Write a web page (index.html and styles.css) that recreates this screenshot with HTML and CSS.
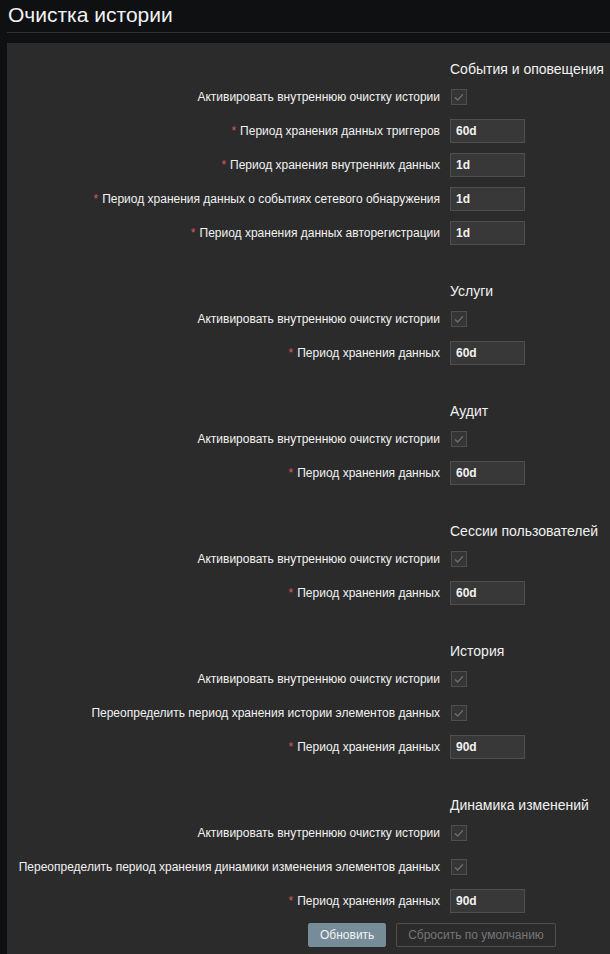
FILE: index.html
```html
<!DOCTYPE html>
<html lang="ru">
<head>
    <meta charset="UTF-8">
    <meta name="viewport" content="width=device-width, initial-scale=1.0">
    <title>Очистка истории</title>
    <link rel="stylesheet" href="styles.css">
</head>
<body>
    <header class="page-header">
        <h1>Очистка истории</h1>
    </header>

    <main class="page-body">
        <form class="form-list">
            <section class="form-section">
                <h4 class="section-title">События и оповещения</h4>
                <div class="form-row">
                    <label class="form-label">Активировать внутреннюю очистку истории</label>
                    <span class="checkbox"><svg viewBox="0 0 16 16"><polyline points="3.5,8.5 6.5,11.5 12.5,5"/></svg></span>
                </div>
                <div class="form-row">
                    <label class="form-label required">Период хранения данных триггеров</label>
                    <input class="text-box" type="text" value="60d">
                </div>
                <div class="form-row">
                    <label class="form-label required">Период хранения внутренних данных</label>
                    <input class="text-box" type="text" value="1d">
                </div>
                <div class="form-row">
                    <label class="form-label required">Период хранения данных о событиях сетевого обнаружения</label>
                    <input class="text-box" type="text" value="1d">
                </div>
                <div class="form-row">
                    <label class="form-label required">Период хранения данных авторегистрации</label>
                    <input class="text-box" type="text" value="1d">
                </div>
            </section>

            <section class="form-section">
                <h4 class="section-title">Услуги</h4>
                <div class="form-row">
                    <label class="form-label">Активировать внутреннюю очистку истории</label>
                    <span class="checkbox"><svg viewBox="0 0 16 16"><polyline points="3.5,8.5 6.5,11.5 12.5,5"/></svg></span>
                </div>
                <div class="form-row">
                    <label class="form-label required">Период хранения данных</label>
                    <input class="text-box" type="text" value="60d">
                </div>
            </section>

            <section class="form-section">
                <h4 class="section-title">Аудит</h4>
                <div class="form-row">
                    <label class="form-label">Активировать внутреннюю очистку истории</label>
                    <span class="checkbox"><svg viewBox="0 0 16 16"><polyline points="3.5,8.5 6.5,11.5 12.5,5"/></svg></span>
                </div>
                <div class="form-row">
                    <label class="form-label required">Период хранения данных</label>
                    <input class="text-box" type="text" value="60d">
                </div>
            </section>

            <section class="form-section">
                <h4 class="section-title">Сессии пользователей</h4>
                <div class="form-row">
                    <label class="form-label">Активировать внутреннюю очистку истории</label>
                    <span class="checkbox"><svg viewBox="0 0 16 16"><polyline points="3.5,8.5 6.5,11.5 12.5,5"/></svg></span>
                </div>
                <div class="form-row">
                    <label class="form-label required">Период хранения данных</label>
                    <input class="text-box" type="text" value="60d">
                </div>
            </section>

            <section class="form-section">
                <h4 class="section-title">История</h4>
                <div class="form-row">
                    <label class="form-label">Активировать внутреннюю очистку истории</label>
                    <span class="checkbox"><svg viewBox="0 0 16 16"><polyline points="3.5,8.5 6.5,11.5 12.5,5"/></svg></span>
                </div>
                <div class="form-row">
                    <label class="form-label">Переопределить период хранения истории элементов данных</label>
                    <span class="checkbox"><svg viewBox="0 0 16 16"><polyline points="3.5,8.5 6.5,11.5 12.5,5"/></svg></span>
                </div>
                <div class="form-row">
                    <label class="form-label required">Период хранения данных</label>
                    <input class="text-box" type="text" value="90d">
                </div>
            </section>

            <section class="form-section">
                <h4 class="section-title">Динамика изменений</h4>
                <div class="form-row">
                    <label class="form-label">Активировать внутреннюю очистку истории</label>
                    <span class="checkbox"><svg viewBox="0 0 16 16"><polyline points="3.5,8.5 6.5,11.5 12.5,5"/></svg></span>
                </div>
                <div class="form-row">
                    <label class="form-label">Переопределить период хранения динамики изменения элементов данных</label>
                    <span class="checkbox"><svg viewBox="0 0 16 16"><polyline points="3.5,8.5 6.5,11.5 12.5,5"/></svg></span>
                </div>
                <div class="form-row">
                    <label class="form-label required">Период хранения данных</label>
                    <input class="text-box" type="text" value="90d">
                </div>
            </section>

            <div class="form-actions">
                <button type="submit" class="btn-primary">Обновить</button>
                <button type="button" class="btn-alt">Сбросить по умолчанию</button>
            </div>
        </form>
    </main>
</body>
</html>
```

FILE: styles.css
```css
:root {
    --bg-color: #0e1012;
    --panel-color: #2b2b2b;
    --text-color: #f2f2f2;
    --border-color: #4f4f4f;
    --input-bg: #383838;
    --danger-color: #d95a5d;
    --button-color: #768d99;
}

body {
    font-family: "Liberation Sans", Arial, sans-serif;
    font-size: 12px;
    color: var(--text-color);
    background-color: var(--bg-color);
    margin: 0;
    padding: 0;
    overflow: hidden;
}

.page-header {
    margin: 0 0 10px 7px;
    border-bottom: 1px solid #303132;
    height: 32px;
}

.page-header h1 {
    margin: 0;
    padding-left: 1px;
    font-size: 21px;
    font-weight: normal;
    line-height: 30px;
}

.page-body {
    margin-left: 7px;
    background: var(--panel-color);
    padding: 14px 0 20px 0;
    min-height: 900px;
}

.form-section {
    padding-bottom: 24px;
}

.form-section:last-of-type {
    padding-bottom: 0;
}

.section-title {
    margin: 0 0 4px 443px;
    font-size: 14px;
    font-weight: normal;
    line-height: 24px;
    white-space: nowrap;
}

.form-row {
    display: flex;
    align-items: center;
    gap: 10px;
    height: 24px;
    margin-bottom: 10px;
}

.form-label {
    width: 433px;
    flex-shrink: 0;
    text-align: right;
    white-space: nowrap;
}

.form-label.required:before {
    content: "*";
    color: var(--danger-color);
    margin-right: 4px;
}

.text-box {
    box-sizing: border-box;
    width: 75px;
    height: 24px;
    padding: 0 5px;
    background: var(--input-bg);
    border: 1px solid var(--border-color);
    color: var(--text-color);
    font-family: inherit;
    font-size: 12px;
    font-weight: bold;
}

.checkbox {
    box-sizing: border-box;
    width: 16px;
    height: 16px;
    margin-left: 1px;
    border: 1px solid var(--border-color);
    background: #353535;
}

.checkbox svg {
    display: block;
    width: 14px;
    height: 14px;
    fill: none;
    stroke: #6f6f6f;
    stroke-width: 1.6;
}

.form-actions {
    display: flex;
    gap: 10px;
    padding-left: 301px;
}

.form-actions button {
    height: 24px;
    padding: 0 11px;
    font-family: inherit;
    font-size: 12px;
    border-radius: 2px;
    cursor: pointer;
}

.btn-primary {
    background-color: var(--button-color);
    border: 1px solid var(--button-color);
    color: #f2f2f2;
    width: 78px;
}

.btn-alt {
    background: transparent;
    border: 1px solid var(--border-color);
    color: #767676;
    width: 160px;
}
```
